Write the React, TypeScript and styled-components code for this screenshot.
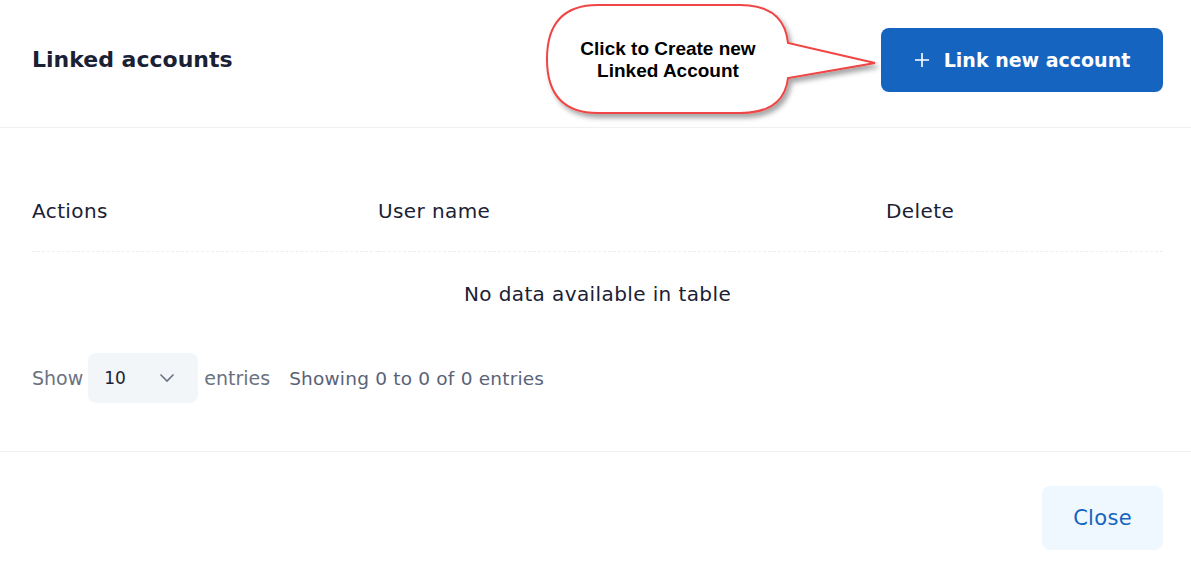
import styled, { createGlobalStyle } from "styled-components";

const GlobalStyle = createGlobalStyle`
    body {
        margin: 0;
        background: #ffffff;
        font-family: "DejaVu Sans", "Open Sans", sans-serif;
    }
`;

const Modal = styled.div`
    width: 1191px;
    height: 574px;
    display: flex;
    flex-direction: column;
    background: #ffffff;
`;

const Header = styled.div`
    position: relative;
    height: 128px;
    box-sizing: border-box;
    display: flex;
    align-items: center;
    justify-content: space-between;
    padding: 0 28px 8px 32px;
    border-bottom: 1px solid #eef0f3;
`;

const Title = styled.h2`
    margin: 0;
    font-size: 22px;
    font-weight: 600;
    color: #1b2135;
`;

const PrimaryButton = styled.button`
    width: 282px;
    height: 64px;
    border: none;
    border-radius: 8px;
    background: #1565c0;
    color: #ffffff;
    font-family: inherit;
    font-size: 19px;
    font-weight: 600;
    display: flex;
    align-items: center;
    justify-content: center;
    gap: 14px;
    margin-top: 1px;
`;

const Callout = styled.svg`
    position: absolute;
    left: 0;
    top: 0;
    pointer-events: none;
`;

const Body = styled.div`
    padding: 0 28px 0 32px;
    height: 324px;
    box-sizing: border-box;
    border-bottom: 1px solid #eef0f3;
`;

const Grid = styled.div`
    display: grid;
    grid-template-columns: 346px 508px 1fr;
`;

const HeadCell = styled.div`
    height: 124px;
    display: flex;
    align-items: flex-end;
    padding-bottom: 28px;
    box-sizing: border-box;
    font-size: 20px;
    letter-spacing: 0.4px;
    color: #1b2135;
    border-bottom: 1px dashed #eceef2;
`;

const EmptyRow = styled.div`
    grid-column: 1 / -1;
    height: 84px;
    display: flex;
    align-items: center;
    justify-content: center;
    font-size: 20px;
    letter-spacing: 0.4px;
    color: #1b2135;
`;

const Footer = styled.div`
    display: flex;
    align-items: center;
    margin-top: 17px;
    font-size: 19px;
    color: #6b7280;
`;

const SelectBox = styled.div`
    width: 110px;
    height: 50px;
    margin: 0 6px 0 5px;
    box-sizing: border-box;
    border-radius: 8px;
    background: #f3f6f9;
    display: flex;
    align-items: center;
    justify-content: space-between;
    padding: 0 23px 0 16px;
    font-size: 17px;
    color: #1b2135;
`;

const Info = styled.span`
    margin-left: 19px;
    font-size: 18.5px;
    letter-spacing: 0.2px;
    color: #596377;
`;

const Bottom = styled.div`
    flex: 1;
    display: flex;
    align-items: flex-start;
    justify-content: flex-end;
    padding: 34px 28px 0 0;
`;

const SecondaryButton = styled.button`
    width: 121px;
    height: 64px;
    border: none;
    border-radius: 8px;
    background: #eff8ff;
    color: #1565c0;
    font-family: inherit;
    font-size: 21px;
    letter-spacing: 0.3px;
    font-weight: 500;
`;

const calloutFont = "Liberation Sans, Arial, sans-serif";

export default function App() {
    return (
        <Modal>
            <GlobalStyle />
            <Header>
                <Title>Linked accounts</Title>
                <PrimaryButton>
                    <svg width="16" height="16" viewBox="0 0 16 16">
                        <path d="M8 1v14M1 8h14" stroke="#fff" strokeWidth="1.6" />
                    </svg>
                    Link new account
                </PrimaryButton>
                <Callout width="900" height="127">
                    <defs>
                        <filter id="sh" x="-10%" y="-10%" width="130%" height="140%">
                            <feDropShadow dx="3" dy="4" stdDeviation="2.5" floodColor="#000" floodOpacity="0.35" />
                        </filter>
                    </defs>
                    <path
                        d="M598 5 H740 Q784 5 788 43 L875 63 L788 78 Q784 113 740 113 H598 Q547 113 547 59 Q547 5 598 5 Z"
                        fill="#fff"
                        stroke="#ef4444"
                        strokeWidth="2"
                        filter="url(#sh)"
                    />
                    <text x="668" y="55" textAnchor="middle" fontFamily={calloutFont} fontWeight="700" fontSize="19" fill="#000">
                        Click to Create new
                    </text>
                    <text x="668" y="77" textAnchor="middle" fontFamily={calloutFont} fontWeight="700" fontSize="19" fill="#000">
                        Linked Account
                    </text>
                </Callout>
            </Header>
            <Body>
                <Grid>
                    <HeadCell>Actions</HeadCell>
                    <HeadCell>User name</HeadCell>
                    <HeadCell>Delete</HeadCell>
                    <EmptyRow>No data available in table</EmptyRow>
                </Grid>
                <Footer>
                    Show
                    <SelectBox>
                        10
                        <svg width="16" height="10" viewBox="0 0 16 10">
                            <path d="M1.5 1.5 8 8l6.5-6.5" fill="none" stroke="#6b7280" strokeWidth="1.6" />
                        </svg>
                    </SelectBox>
                    entries
                    <Info>Showing 0 to 0 of 0 entries</Info>
                </Footer>
            </Body>
            <Bottom>
                <SecondaryButton>Close</SecondaryButton>
            </Bottom>
        </Modal>
    );
}
